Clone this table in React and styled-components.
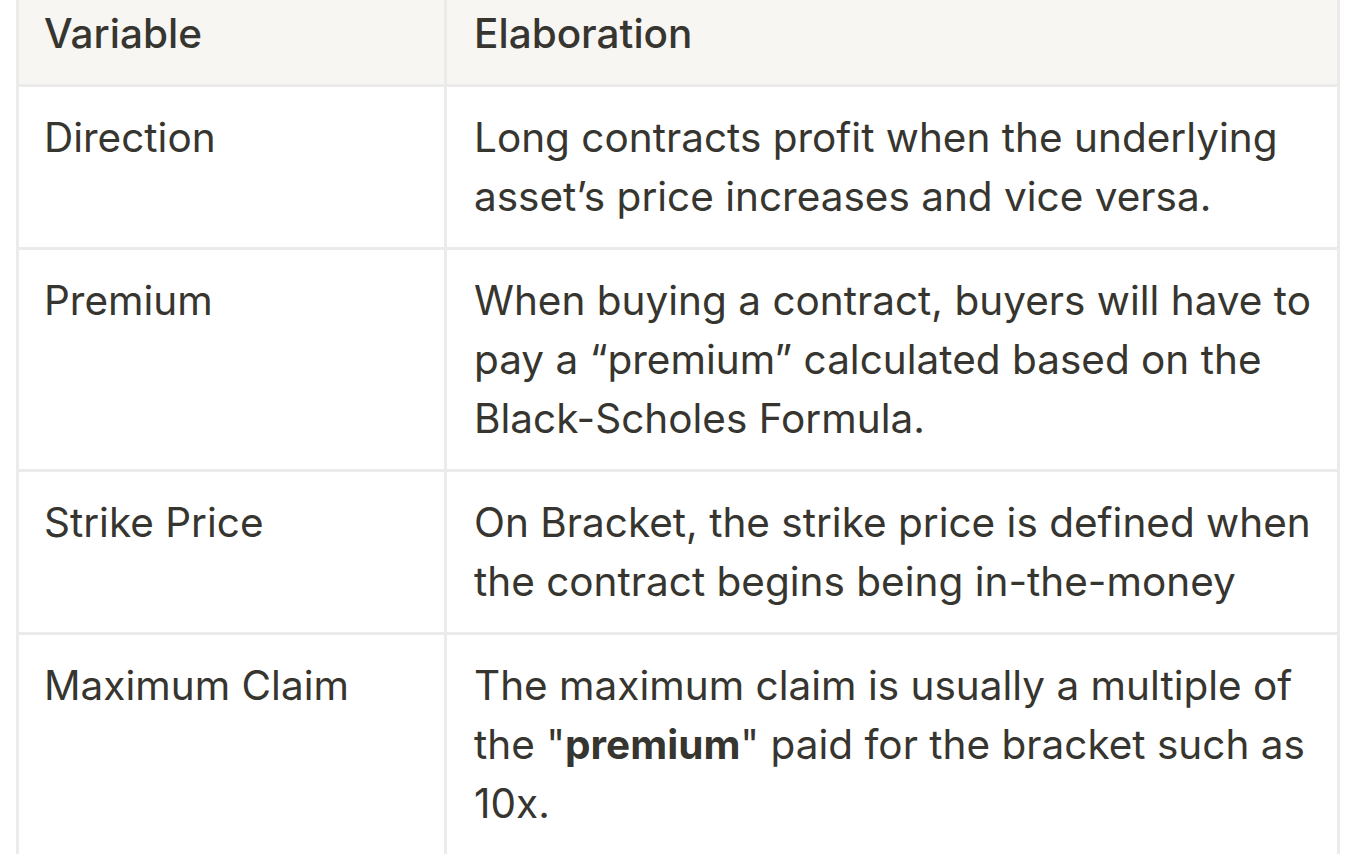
import React from 'react';
import styled, { createGlobalStyle } from 'styled-components';

const GlobalStyle = createGlobalStyle`
  html, body {
    margin: 0;
    padding: 0;
    background: #ffffff;
    overflow: hidden;
  }
  body {
    font-family: Inter, 'Liberation Sans', Arial, sans-serif;
    color: #37352f;
  }
`;

const Page = styled.div`
  width: 1370px;
  height: 854px;
  overflow: hidden;
  padding-left: 16px;
  box-sizing: border-box;
`;

const Table = styled.div`
  display: grid;
  grid-template-columns: 428px 893px;
  width: max-content;
  margin-top: -20px;
  border-right: 3px solid #ebebea;
  border-bottom: 3px solid #ebebea;
`;

const Cell = styled.div`
  box-sizing: border-box;
  border-left: 3px solid #ebebea;
  border-top: 3px solid #ebebea;
  padding: 21px 20px 21px ${props => (props.$wide ? '27px' : '25px')};
  font-size: 40.5px;
  line-height: 59px;
  color: #37352f;
`;

const HeaderCell = styled(Cell)`
  background: #f7f6f3;
  font-weight: 500;
`;

const Line = styled.div`
  white-space: nowrap;
`;

const Bold = styled.strong`
  font-weight: 700;
`;

const rows = [
    {
        variable: 'Direction',
        lines: ['Long contracts profit when the underlying', 'asset’s price increases and vice versa.'],
    },
    {
        variable: 'Premium',
        lines: [
            'When buying a contract, buyers will have to',
            'pay a “premium” calculated based on the',
            'Black-Scholes Formula.',
        ],
    },
    {
        variable: 'Strike Price',
        lines: ['On Bracket, the strike price is defined when', 'the contract begins being in-the-money'],
    },
    {
        variable: 'Maximum Claim',
        lines: [
            'The maximum claim is usually a multiple of',
            <>the "<Bold>premium</Bold>" paid for the bracket such as</>,
            '10x.',
        ],
    },
];

function App() {
    return (
        <>
            <GlobalStyle />
            <Page>
                <Table>
                    <HeaderCell>Variable</HeaderCell>
                    <HeaderCell $wide>Elaboration</HeaderCell>
                    {rows.map((row, index) => (
                        <React.Fragment key={index}>
                            <Cell>{row.variable}</Cell>
                            <Cell $wide>
                                {row.lines.map((line, i) => (
                                    <Line key={i}>{line}</Line>
                                ))}
                            </Cell>
                        </React.Fragment>
                    ))}
                </Table>
            </Page>
        </>
    );
}

export default App;
